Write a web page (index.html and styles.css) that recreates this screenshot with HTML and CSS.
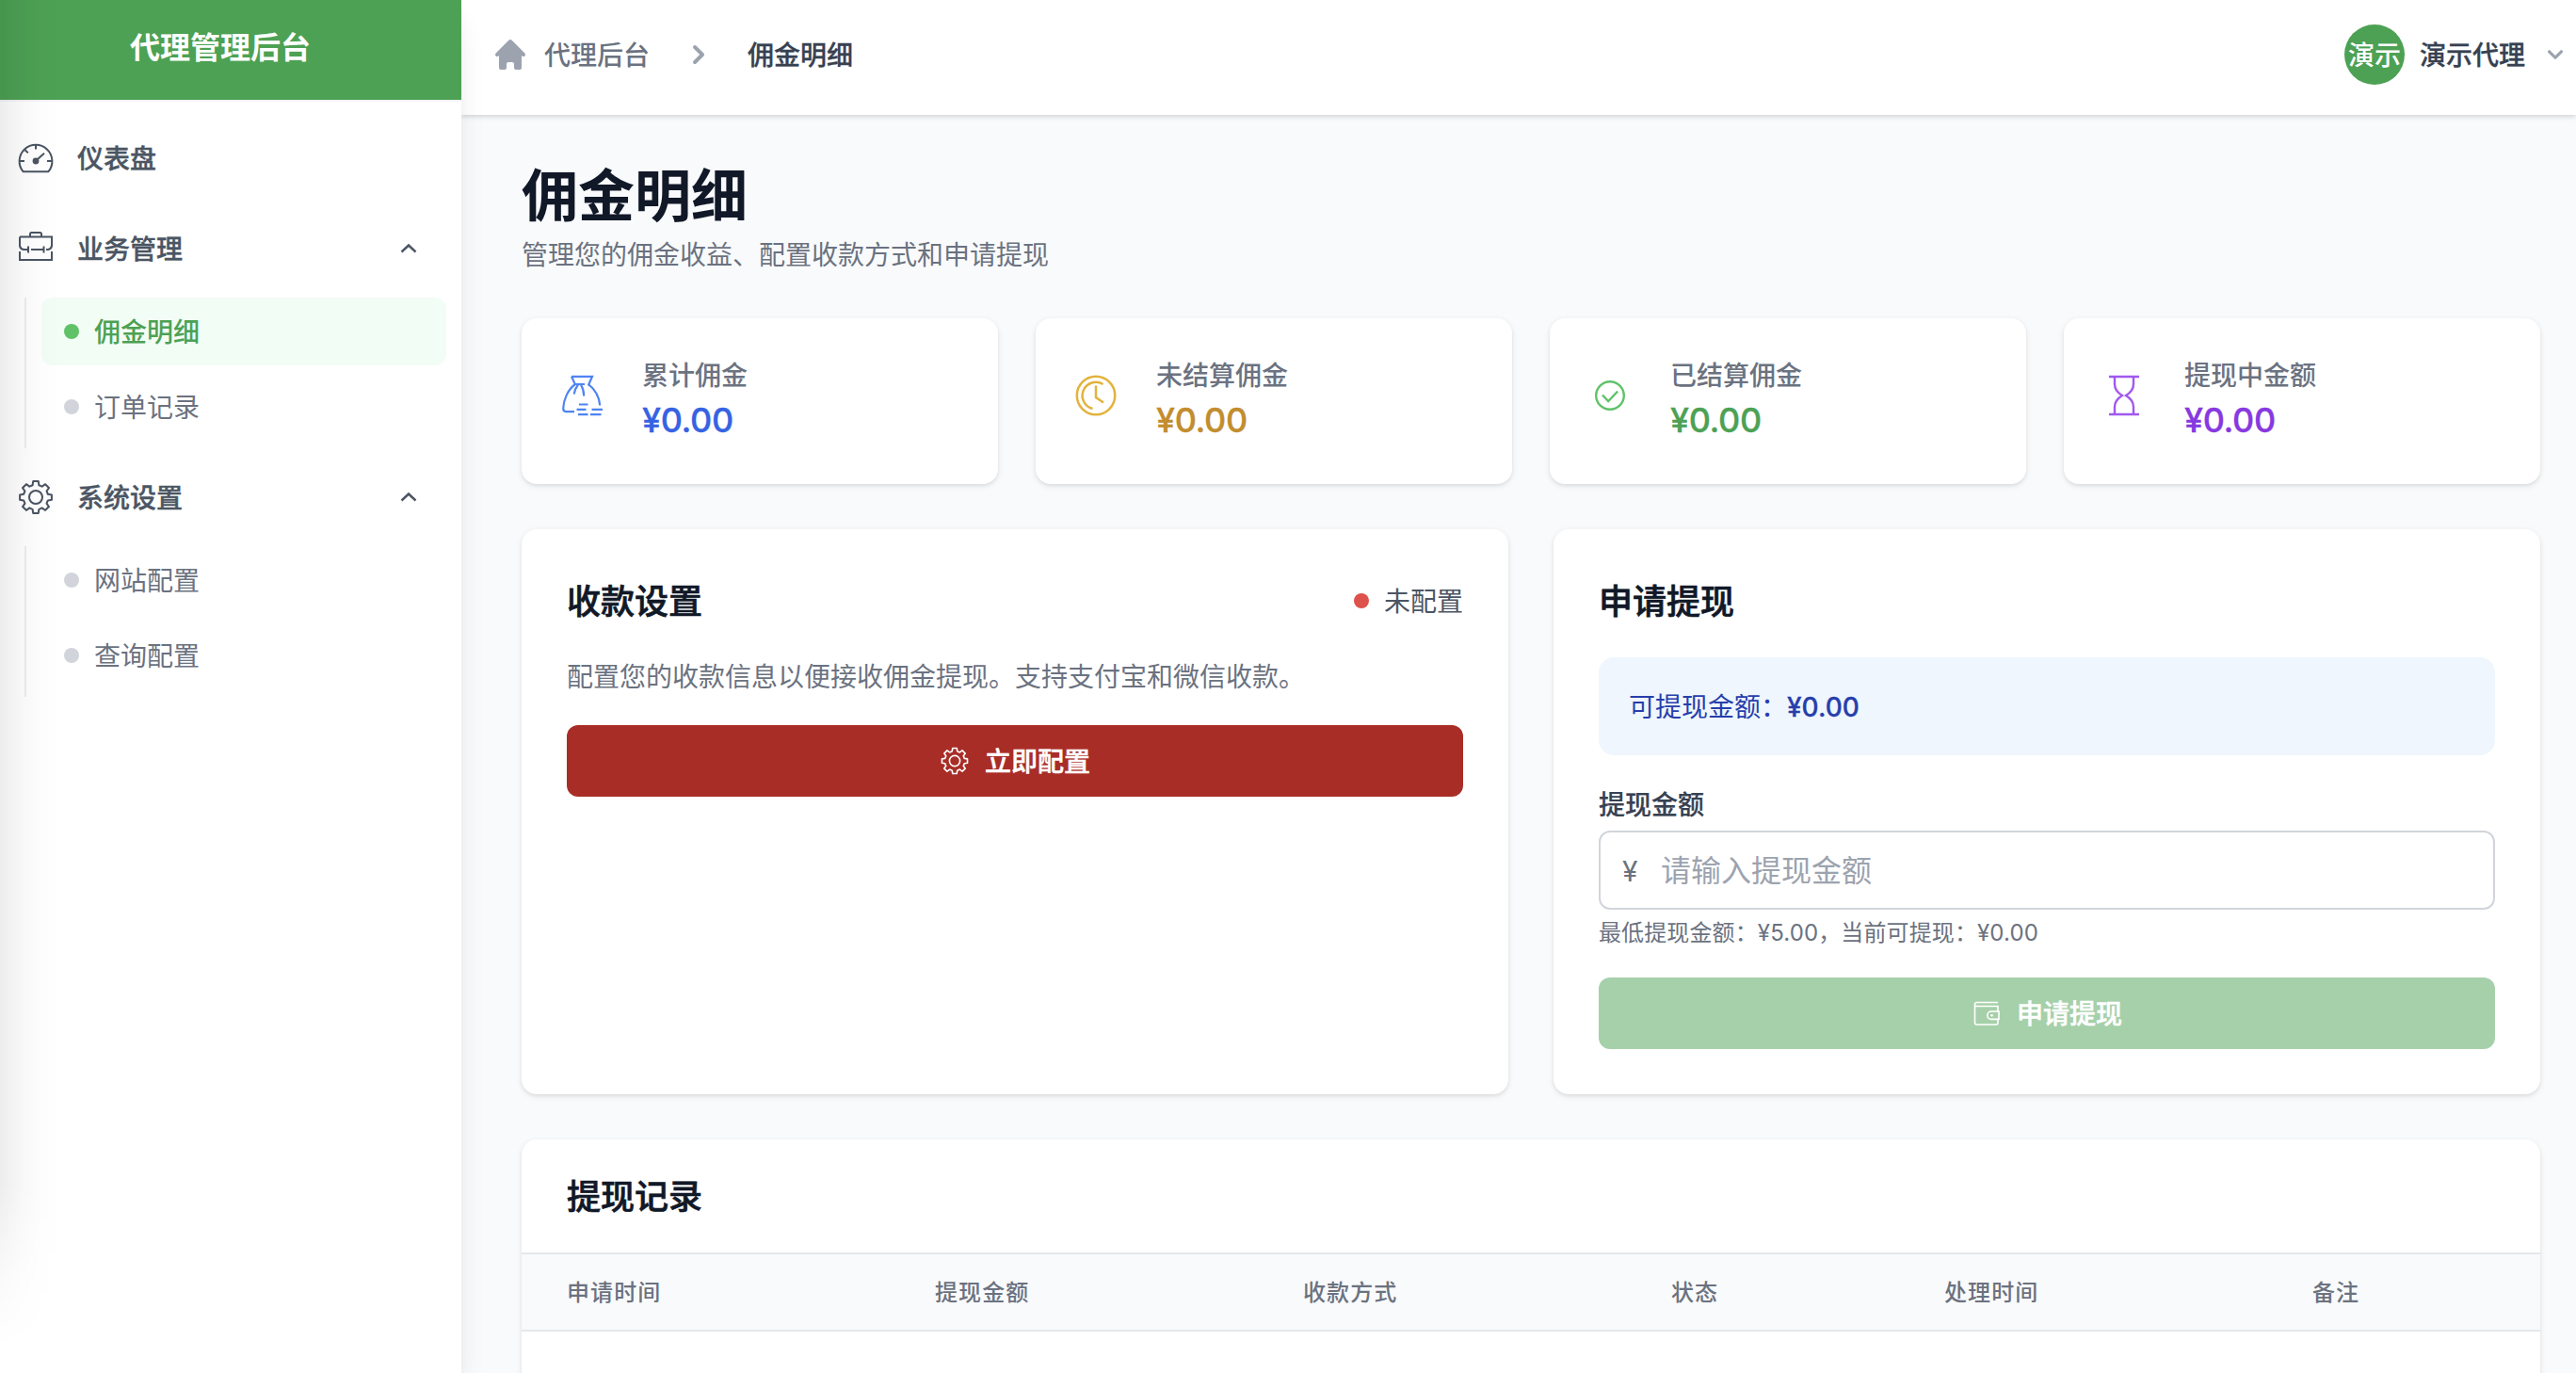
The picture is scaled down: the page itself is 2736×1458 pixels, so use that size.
FILE: index.html
```html
<!DOCTYPE html>
<html lang="zh-CN">
<head>
<meta charset="utf-8">
<title>佣金明细</title>
<link rel="stylesheet" href="styles.css">
</head>
<body>
<svg width="0" height="0" class="defs">
  <symbol id="gear" viewBox="-0.3 -0.3 24.6 24.6"><g fill="none" stroke="currentColor" stroke-width="1.25" stroke-linejoin="round"><path d="M10.3 1.6h3.4l.4 2.6 2 .8 2.1-1.5 2.4 2.4-1.5 2.1.8 2 2.5.4v3.3l-2.5.4-.8 2 1.5 2.1-2.4 2.3-2.1-1.5-2 .9-.4 2.5h-3.4l-.4-2.5-2-.9-2.1 1.5-2.4-2.3 1.500-2.1-.8-2-2.500-.4v-3.300l2.500-.4.8-2-1.500-2.100 2.400-2.400L7.900 5l2-.8z"/><circle cx="12" cy="12" r="4.300"/></g></symbol>
  <symbol id="up" viewBox="0 0 20 12"><path d="M2.500 9.500 10 2.500l7.500 7" fill="none" stroke="currentColor" stroke-width="2.400"/></symbol>
</svg>
<div class="app">
  <aside class="sidebar">
    <div class="brand">代理管理后台</div>
    <nav class="nav">
      <a class="nav-item">
        <svg class="nav-icon" viewBox="0 0 40 40"><g fill="none" stroke="currentColor" stroke-width="2"><path d="M6.500 34.200A17.400 17.400 0 1 1 33.500 34.200z" stroke-linejoin="round"/><path d="M20 5.500v5M8.600 11.200l3.200 3.200M3 23h5M32 23h5M21.500 21.500l7.500-6.800"/></g><circle cx="20" cy="23" r="3.400" fill="currentColor"/></svg>
        <span>仪表盘</span>
      </a>
      <div class="group">
        <a class="nav-item">
          <svg class="nav-icon" viewBox="0 0 40 40"><g fill="none" stroke="currentColor" stroke-width="2"><path d="M14 7.500V4.500q0-1.500 1.500-1.500h9q1.500 0 1.500 1.500v3M3 7.500h34v9.500q-.5 3.500-4 4h-2M3 7.500v9.500q.5 3.500 4 4h5M15 21h13M12 17.500v7M28.500 17.500v7M3 23v9h34v-9"/></g></svg>
          <span>业务管理</span>
          <svg class="caret"><use href="#up"/></svg>
        </a>
        <div class="sub">
          <a class="sub-item active"><i class="dot"></i><span>佣金明细</span></a>
          <a class="sub-item"><i class="dot"></i><span>订单记录</span></a>
        </div>
      </div>
      <div class="group">
        <a class="nav-item">
          <svg class="nav-icon"><use href="#gear"/></svg>
          <span>系统设置</span>
          <svg class="caret"><use href="#up"/></svg>
        </a>
        <div class="sub">
          <a class="sub-item"><i class="dot"></i><span>网站配置</span></a>
          <a class="sub-item"><i class="dot"></i><span>查询配置</span></a>
        </div>
      </div>
    </nav>
    <div class="edge-shadow"></div>
  </aside>
  <div class="page">
    <header class="topbar">
      <div class="crumbs">
        <svg class="ic40" viewBox="0 0 20 20" fill="currentColor"><path d="M10.707 2.293a1 1 0 00-1.414 0l-7 7a1 1 0 001.414 1.414L4 10.414V17a1 1 0 001 1h2a1 1 0 001-1v-2a1 1 0 011-1h2a1 1 0 011 1v2a1 1 0 001 1h2a1 1 0 001-1v-6.586l.293.293a1 1 0 001.414-1.414l-7-7z"/></svg>
        <span class="crumb">代理后台</span>
        <svg class="ic40 sep" viewBox="0 0 20 20" fill="currentColor"><path d="M7.293 14.707a1 1 0 010-1.414L10.586 10 7.293 6.707a1 1 0 011.414-1.414l4 4a1 1 0 010 1.414l-4 4a1 1 0 01-1.414 0z"/></svg>
        <span class="crumb current">佣金明细</span>
      </div>
      <div class="user">
        <span class="avatar">演示</span>
        <span class="name">演示代理</span>
        <svg class="ic32" viewBox="0 0 20 20" fill="currentColor"><path d="M5.293 7.293a1 1 0 011.414 0L10 10.586l3.293-3.293a1 1 0 111.414 1.414l-4 4a1 1 0 01-1.414 0l-4-4a1 1 0 010-1.414z"/></svg>
      </div>
    </header>
    <main class="main">
      <h1>佣金明细</h1>
      <p class="lead">管理您的佣金收益、配置收款方式和申请提现</p>
      <section class="stats">
        <div class="card stat blue">
          <svg class="stat-icon" viewBox="0 0 48 48"><g fill="none" stroke="currentColor" stroke-width="2.200"><path d="M13 3.800h22l-3.800 8.700 1.200 1.200M13 3.800l4 8.700M16 12h11M17 12C9 17.500 4.500 29 4.200 37.500q0 3.500 2.800 3.600h9M31 12c7.500 6 11.500 14 12.200 22.500M20 12.500q-3.500 4.500-4.300 10M23 12.500q3 5 3.200 12"/><path d="M21 33.500h9.500M18.500 38.800h10M34.500 38.800h11.500M20 44.200h10.500M33 44.200h11.500"/></g></svg>
          <div><div class="stat-label">累计佣金</div><div class="stat-value">¥0.00</div></div>
        </div>
        <div class="card stat amber">
          <svg class="stat-icon" viewBox="0 0 48 48"><g fill="none" stroke="currentColor" stroke-width="2.500"><circle cx="24" cy="24" r="20.200"/><path d="M31.500 12A14.300 14.300 0 1 0 20.500 38M24 13.500V26l8 5.500"/></g></svg>
          <div><div class="stat-label">未结算佣金</div><div class="stat-value">¥0.00</div></div>
        </div>
        <div class="card stat green">
          <svg class="stat-icon" viewBox="0 0 48 48"><g fill="none" stroke="currentColor" stroke-width="2.400"><circle cx="24" cy="24" r="14.800"/><path d="M16 23.500l6.200 6.500 10-10.500"/></g></svg>
          <div><div class="stat-label">已结算佣金</div><div class="stat-value">¥0.00</div></div>
        </div>
        <div class="card stat purple">
          <svg class="stat-icon" viewBox="0 0 48 48"><g fill="none" stroke="currentColor" stroke-width="2.400"><path d="M8 4h32M8 44h32M14 4v8q0 7 8 12-8 5-8 12v8M34 4v8q0 7-8 12 8 5 8 12v8"/></g></svg>
          <div><div class="stat-label">提现中金额</div><div class="stat-value">¥0.00</div></div>
        </div>
      </section>
      <section class="panels">
        <div class="card panel">
          <div class="panel-head"><h2>收款设置</h2><span class="status"><i class="dot"></i><span>未配置</span></span></div>
          <p class="desc">配置您的收款信息以便接收佣金提现。支持支付宝和微信收款。</p>
          <button class="btn red"><svg class="ic32"><use href="#gear"/></svg><span>立即配置</span></button>
        </div>
        <div class="card panel">
          <div class="panel-head"><h2>申请提现</h2></div>
          <div class="notice">可提现金额：<b>¥0.00</b></div>
          <label class="label">提现金额</label>
          <div class="input"><span class="yen">¥</span><span class="ph">请输入提现金额</span></div>
          <p class="help">最低提现金额：¥5.00，当前可提现：¥0.00</p>
          <button class="btn pale"><svg class="ic32" viewBox="0 0 32 32"><g fill="none" stroke="currentColor" stroke-width="1.600"><path d="M28 4.500H5.500Q3.500 4.500 3.500 6.500V26q0 2 2 2H26q2 0 2-2v-3.500M3.500 6.500q0 2 2 2H28V14"/><path d="M29 14h-8a4.200 4.200 0 0 0 0 8.400h8z"/></g><circle cx="21.500" cy="18.200" r="1.300" fill="currentColor"/></svg><span>申请提现</span></button>
        </div>
      </section>
      <section class="card records">
        <h2>提现记录</h2>
        <div class="thead"><span>申请时间</span><span>提现金额</span><span>收款方式</span><span>状态</span><span>处理时间</span><span>备注</span></div>
      </section>
    </main>
  </div>
</div>
</body>
</html>
```
FILE: styles.css
```css
* { box-sizing: border-box; margin: 0; padding: 0; }
html, body { height: 100%; overflow: hidden; }
body { font-family: Inter, "Noto Sans CJK SC", sans-serif; font-size: 28px; line-height: 40px; color: #6b7280; background: #f9fafb; }
svg { display: block; flex: none; }
.defs { position: absolute; }
.app { display: flex; height: 1458px; overflow: hidden; }

.sidebar { position: relative; z-index: 2; flex: none; width: 490px; background: #fff; box-shadow: 0 20px 30px -6px rgba(0,0,0,.1), 0 8px 12px -4px rgba(0,0,0,.05); }
.brand { height: 108px; padding: 0 22px 5px 0; background: #4da154; border-bottom: 2px solid #f3f4f6; color: #fff; font-size: 32px; font-weight: 700; display: flex; align-items: center; justify-content: center; }
.nav { display: flex; flex-direction: column; padding: 24px 16px 0 18px; color: #4b5563; }
.nav-item { display: flex; align-items: center; height: 72px; gap: 24px; font-weight: 500; -webkit-text-stroke: .4px; }
.nav-item span { flex: 1; padding-top: 2px; }
.nav-icon { width: 40px; height: 40px; }
.caret { width: 20px; height: 12px; margin-right: 30px; }
.group { margin-top: 24px; }
.group + .group { margin-top: 16px; }
.sub { display: flow-root; margin: 16px 0 0 8px; padding-left: 16px; border-left: 2px solid #edeef0; }
.sub-item { display: flex; align-items: center; height: 72px; margin-bottom: 8px; padding-left: 24px; gap: 16px; border-radius: 12px; color: #6b7280; }
.sub-item span { padding-top: 2px; }
.dot { width: 16px; height: 16px; border-radius: 50%; background: #d1d5db; flex: none; }
.active { background: #f2fdf5; color: #4da154; font-weight: 500; }
.active .dot { background: #5fc269; }
.edge-shadow { position: absolute; inset: 0 auto 0 0; width: 66px; height: 1430px; background: linear-gradient(90deg, rgba(0,0,0,.07), rgba(0,0,0,.03) 34%, rgba(0,0,0,.006) 70%, transparent); -webkit-mask: linear-gradient(#000 88%, rgba(0,0,0,.3) 95%, transparent); mask: linear-gradient(#000 88%, rgba(0,0,0,.3) 95%, transparent); }

.page { flex: 1; display: flex; flex-direction: column; }
.topbar { position: relative; flex: none; height: 122px; padding: 0 6px 6px 32px; background: #fff; box-shadow: 0 2px 6px rgba(0,0,0,.1), 0 2px 4px rgba(0,0,0,.06); display: flex; align-items: center; justify-content: space-between; }
.crumbs { display: flex; align-items: center; gap: 16px; font-weight: 500; color: #9ca3af; }
.crumb { padding-top: 2px; color: #6b7280; }
.crumb.current { color: #374151; -webkit-text-stroke: .3px; }
.sep { margin: 0 16px; }
.ic40 { width: 40px; height: 40px; }
.ic32 { width: 32px; height: 32px; }
.user { display: flex; align-items: center; gap: 16px; color: #9ca3af; }
.avatar { width: 64px; height: 64px; padding-top: 1px; border-radius: 50%; background: #4da154; color: #fff; font-weight: 500; display: flex; align-items: center; justify-content: center; }
.name { padding-top: 2px; color: #374151; font-weight: 500; -webkit-text-stroke: .3px; }

.main { padding: 48px 38px 0 64px; }
h1 { height: 72px; padding-top: 2px; font-size: 60px; line-height: 72px; font-weight: 700; color: #111827; }
.lead { margin-top: 9px; }
.card { background: #fff; border-radius: 16px; box-shadow: 0 2px 6px rgba(0,0,0,.1), 0 2px 4px -1px rgba(0,0,0,.06); }
.stats { display: grid; grid-template-columns: repeat(4, 1fr); gap: 40px; margin-top: 47px; }
.stat { display: flex; align-items: center; gap: 40px; padding: 40px; height: 176px; }
.stat-icon { width: 48px; height: 48px; margin-bottom: 12px; }
.stat-label { height: 40px; padding-top: 1px; font-weight: 500; }
.stat-value { font-size: 36px; line-height: 56px; font-weight: 500; letter-spacing: -.4px; -webkit-text-stroke: .3px; }
.blue { color: #4f84f0; } .blue .stat-value { color: #3662e3; }
.amber { color: #e2b33c; } .amber .stat-value { color: #c28d2e; }
.green { color: #5fc269; } .green .stat-value { color: #4da154; }
.purple { color: #a158f0; } .purple .stat-value { color: #8739e0; }
.stat-label { color: #6b7280; }

.panels { display: grid; grid-template-columns: 1fr 1fr; gap: 48px; margin-top: 48px; }
.panel { height: 600px; padding: 48px; }
.panel-head { display: flex; align-items: center; justify-content: space-between; height: 56px; margin-bottom: 32px; }
h2 { padding-top: 2px; font-size: 36px; line-height: 56px; font-weight: 500; color: #111827; -webkit-text-stroke: .7px; }
.status { display: flex; align-items: center; gap: 16px; color: #4b5563; }
.status span { padding-top: 2px; }
.status .dot { background: #de524c; }
.desc { height: 40px; padding-top: 1px; }
.btn { display: flex; align-items: center; justify-content: center; gap: 16px; width: 100%; height: 76px; border: 0; border-radius: 12px; color: #fff; font: 500 28px/40px Inter, "Noto Sans CJK SC", sans-serif; }
.btn span { padding-top: 2px; -webkit-text-stroke: .5px; }
.red { margin-top: 32px; background: #a92d27; }
.pale { margin-top: 32px; background: #a6d0aa; }
.notice { height: 104px; padding: 33px 32px 31px; border-radius: 16px; background: #eff6fe; color: #273eab; }
.notice b { font-weight: 500; -webkit-text-stroke: .3px; }
.label { display: block; height: 40px; margin-top: 32px; padding-top: 1px; color: #374151; font-weight: 500; -webkit-text-stroke: .2px; }
.input { display: flex; align-items: center; height: 84px; margin-top: 8px; padding: 2px 22px 0 23px; border: 2px solid #d1d5db; border-radius: 12px; }
.yen { width: 41px; font-size: 30px; }
.ph { color: #9ca3af; font-size: 32px; }
.help { height: 32px; margin-top: 8px; padding-top: 1px; font-size: 24px; line-height: 32px; letter-spacing: .12px; }

.records { margin-top: 48px; height: 320px; }
.records h2 { padding: 33px 48px 31px; }
.thead { display: grid; grid-template-columns: 391fr 391fr 391fr 290fr 391fr 290fr; height: 84px; align-items: center; background: #f9fafb; border: solid #e5e7eb; border-width: 2px 0; font-size: 24px; font-weight: 500; letter-spacing: 1.1px; }
.thead span { padding: 2px 0 0 48px; }
```
